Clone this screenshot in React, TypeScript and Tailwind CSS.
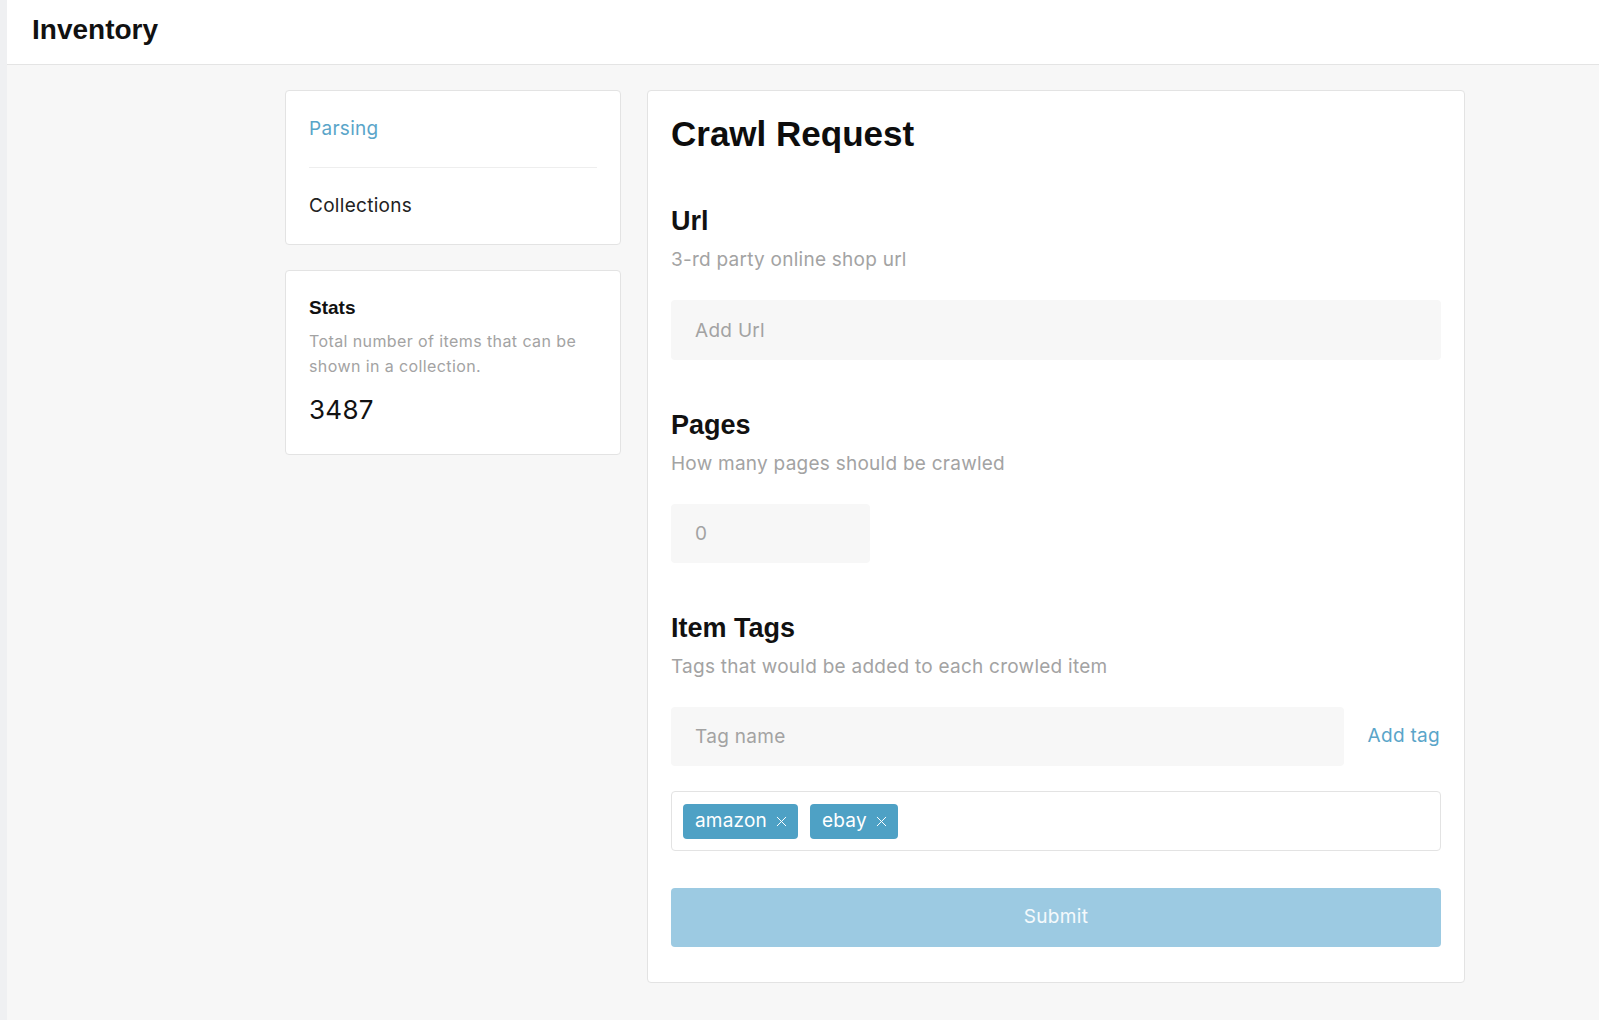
import { X } from 'lucide-react'

const body = { fontFamily: 'Inter, "Noto Sans", sans-serif' }
const head = { fontFamily: '"Liberation Sans", Arial, sans-serif' }

function Section({ title, hint, children }: { title: string; hint: string; children: React.ReactNode }) {
    return (
        <div className="mt-[51px]">
            <h2 className="text-[27px] leading-[32px] font-bold text-[#111]" style={head}>{title}</h2>
            <p className="mt-[10px] text-[19px] leading-[26px] tracking-[0.25px] text-[#a3a3a3]">{hint}</p>
            <div className="mt-[27px]">{children}</div>
        </div>
    )
}

export default function App() {
    const tags = ['amazon', 'ebay']

    return (
        <div className="min-h-screen flex bg-[#f7f7f7]" style={body}>
            <div className="w-[7px] bg-[#eff0f2] shrink-0" />
            <div className="flex-1 flex flex-col">
                {/* Header */}
                <header className="h-[65px] bg-white border-b border-[#e4e4e4] flex items-center pl-[25px] pb-[4px]">
                    <h1 className="text-[28px] font-bold text-[#111]" style={head}>Inventory</h1>
                </header>

                <div className="flex items-start gap-[26px] pl-[278px] pt-[25px] pb-[37px]">
                    {/* Left column */}
                    <div className="w-[336px] flex flex-col gap-[25px]">
                        <nav className="bg-white border border-[#e3e3e3] rounded-[4px] px-[23px]">
                            <a className="h-[77px] flex items-center text-[19px] tracking-[0.3px] text-[#5aa5c9] border-b border-[#eeeeee]">Parsing</a>
                            <a className="h-[76px] flex items-center text-[19px] tracking-[0.3px] text-[#222]">Collections</a>
                        </nav>

                        <div className="bg-white border border-[#e3e3e3] rounded-[4px] px-[23px] pt-[25px] pb-[26px]">
                            <h3 className="text-[19px] leading-[24px] font-bold text-[#111]" style={head}>Stats</h3>
                            <p className="mt-[9px] text-[16px] leading-[25px] tracking-[0.4px] text-[#a3a3a3]">
                                Total number of items that can be shown in a collection.
                            </p>
                            <div className="mt-[13px] text-[26px] leading-[36px] tracking-[0.3px] text-[#111]">3487</div>
                        </div>
                    </div>

                    {/* Main */}
                    <main className="w-[818px] bg-white border border-[#e3e3e3] rounded-[4px] px-[23px] pt-[23px] pb-[35px]">
                        <h1 className="text-[35px] leading-[40px] font-bold text-[#0d0d0d]" style={head}>Crawl Request</h1>

                        <Section title="Url" hint="3-rd party online shop url">
                            <input
                                placeholder="Add Url"
                                className="w-full h-[60px] rounded-[4px] bg-[#f7f7f7] px-[24px] text-[19px] tracking-[0.3px] text-[#333] placeholder:text-[#a3a3a3] outline-none"
                            />
                        </Section>

                        <div className="-mt-[2px]">
                            <Section title="Pages" hint="How many pages should be crawled">
                                <input
                                    placeholder="0"
                                    className="w-[199px] h-[59px] rounded-[4px] bg-[#f7f7f7] px-[24px] text-[19px] text-[#333] placeholder:text-[#a3a3a3] outline-none"
                                />
                            </Section>
                        </div>

                        <div className="-mt-[2px]">
                            <Section title="Item Tags" hint="Tags that would be added to each crowled item">
                                <div className="flex items-center gap-[24px]">
                                    <input
                                        placeholder="Tag name"
                                        className="flex-1 h-[59px] rounded-[4px] bg-[#f7f7f7] px-[24px] text-[19px] tracking-[0.3px] text-[#333] placeholder:text-[#a3a3a3] outline-none"
                                    />
                                    <button className="text-[19px] tracking-[0.3px] text-[#5aa5c9] pr-[1px]">Add tag</button>
                                </div>

                                <div className="mt-[25px] h-[60px] border border-[#e3e3e3] rounded-[4px] flex items-center gap-[12px] px-[11px]">
                                    {tags.map((t) => (
                                        <span
                                            key={t}
                                            className="h-[35px] flex items-center gap-[6px] rounded-[4px] bg-[#4ea1c5] pl-[12px] pr-[8px] text-[19px] tracking-[0.2px] text-white"
                                        >
                                            {t}
                                            <X className="h-[17px] w-[17px]" strokeWidth={1.4} />
                                        </span>
                                    ))}
                                </div>

                                <button className="mt-[37px] w-full h-[59px] rounded-[4px] bg-[#9ccae2] text-[19px] tracking-[0.3px] text-white/90">
                                    Submit
                                </button>
                            </Section>
                        </div>
                    </main>
                </div>
            </div>
        </div>
    )
}
